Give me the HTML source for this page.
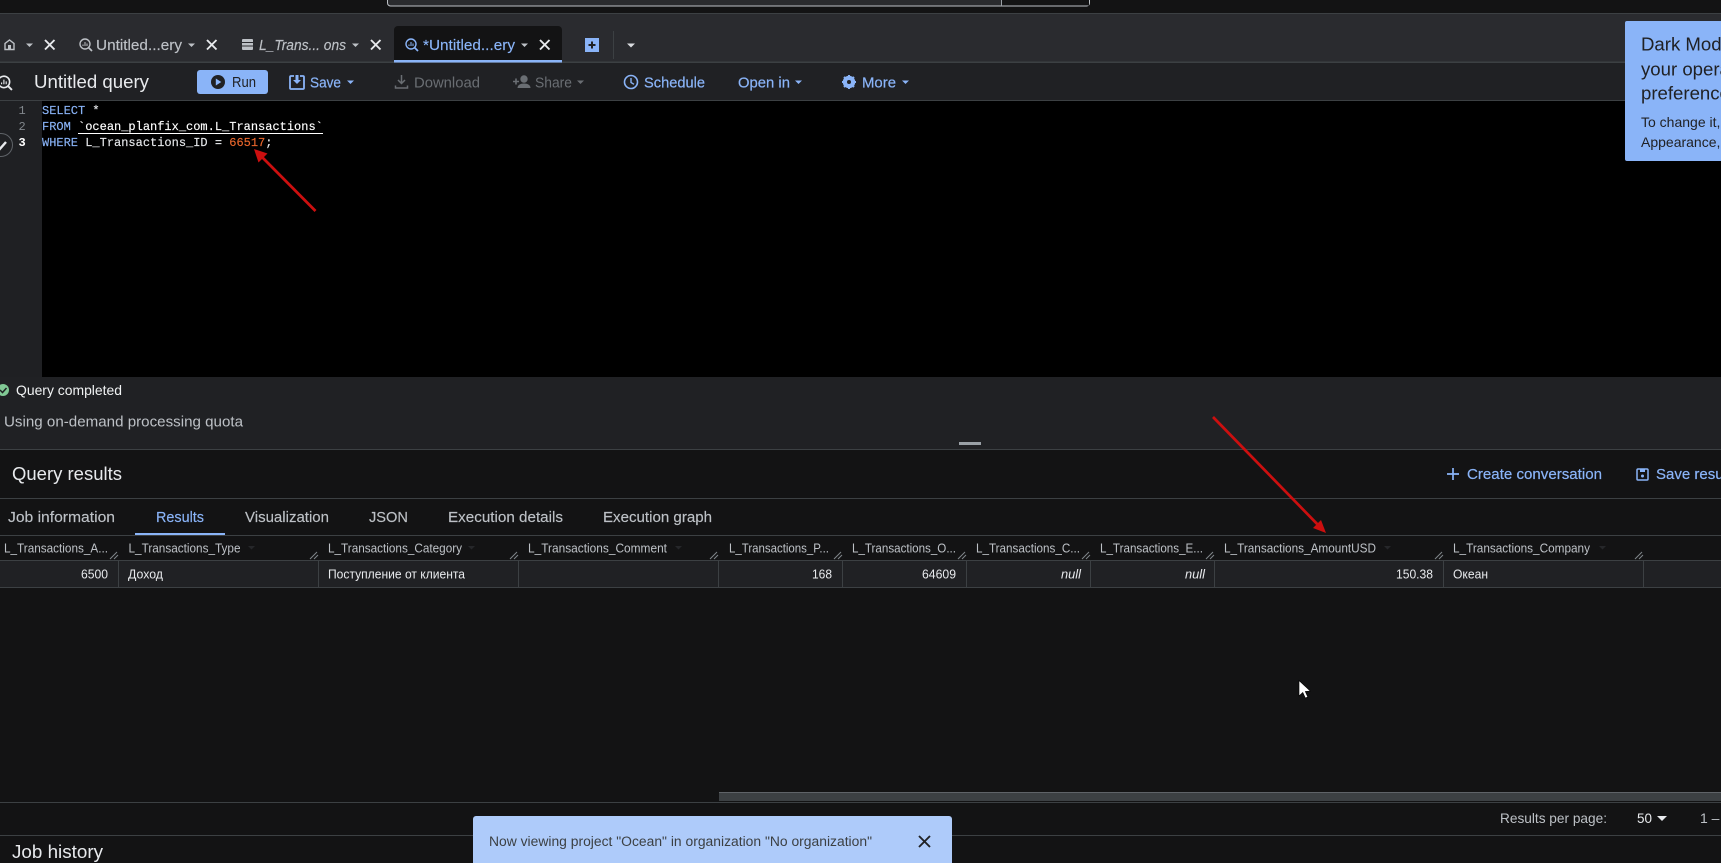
<!DOCTYPE html>
<html lang="en"><head><meta charset="utf-8"><title>Untitled query</title>
<style>
html,body{margin:0;padding:0;background:#131314;width:1721px;height:863px;overflow:hidden}
svg{display:block;position:absolute;left:0;top:0}
text{font-family:"Liberation Sans","Noto Sans CJK SC",sans-serif;white-space:pre}
.m{font-family:"Liberation Mono",monospace;font-size:12px;stroke-width:.15px}
.l{fill:#8ab4f8;stroke:#8ab4f8;stroke-width:.2px}
.h{font-size:12.5px;fill:#bdc1c6}
.c{font-size:12.5px;fill:#e8eaed}
.t{font-size:15px;fill:#bdc1c6;stroke:#bdc1c6;stroke-width:.15px}
.tb{font-size:15px}
</style></head><body>
<svg width="1721" height="863" viewBox="0 0 1721 863" xmlns="http://www.w3.org/2000/svg">
<defs>
<g id="q" fill="none" stroke-width="1.4"><circle cx="6" cy="6" r="5"/><path d="M9.6 9.6 13 13" stroke-width="1.7"/><path d="M4 8V6.5M6 8V4M8 8V5.5" stroke-width="1"/></g>
<g id="x" fill="none" stroke-width="1.9"><path d="M0 0 9.5 9.5M9.5 0 0 9.5"/></g>
<path id="rz" d="M0 8 7 1M4 8 8 4" fill="none" stroke="#80868b" stroke-width="1"/>
</defs>
<rect width="1721" height="863" fill="#131314"/>
<!-- top strip -->
<rect x="387.500" y="-6" width="702" height="12" rx="3" fill="#2a2b2e" stroke="#bdc1c6"/>
<rect x="1002" y="-1" width="87" height="6.500" fill="#141415"/>
<path d="M1001.500 0V6" stroke="#9aa0a6"/>
<rect y="13" width="1721" height="50" fill="#2a2b2f"/>
<rect y="13" width="1721" height="1" fill="#3c4043"/>
<rect y="61.500" width="1721" height="1.500" fill="#3c4043"/>
<rect y="63" width="1721" height="38" fill="#202124"/>
<rect y="100" width="1721" height="1" fill="#3c4043"/>
<!-- tabs -->
<path d="M5 49.500V43.500L9.500 40 14 43.500V49.500Z" fill="none" stroke="#bdc1c6" stroke-width="1.400"/><rect x="8" y="45" width="3" height="4.500" fill="#bdc1c6"/>
<path d="M26 43.500h7l-3.500 3.500z" fill="#bdc1c6"/>
<use href="#x" x="45" y="40" stroke="#e8eaed"/>
<use href="#q" x="79" y="38" stroke="#bdc1c6"/>
<text class="t" x="96" y="50" textLength="86" lengthAdjust="spacingAndGlyphs">Untitled...ery</text>
<path d="M188 43.500h7l-3.500 3.500z" fill="#bdc1c6"/>
<use href="#x" x="207" y="40" stroke="#e8eaed"/>
<rect x="242" y="39" width="11" height="11" rx="1" fill="#bdc1c6"/><path d="M242 42.500h11M242 46h11" stroke="#2a2b2f"/>
<text class="t" x="259" y="50" font-style="italic" textLength="87" lengthAdjust="spacingAndGlyphs">L_Trans... ons</text>
<path d="M352 43.500h7l-3.500 3.500z" fill="#bdc1c6"/>
<use href="#x" x="371" y="40" stroke="#e8eaed"/>
<path d="M394 62V30a4 4 0 0 1 4-4h160a4 4 0 0 1 4 4v32z" fill="#131314"/>
<rect x="394" y="60" width="168" height="2.500" fill="#8ab4f8"/>
<use href="#q" x="405" y="38" stroke="#8ab4f8"/>
<text class="t" x="423" y="50" style="fill:#8ab4f8;stroke:#8ab4f8" textLength="92" lengthAdjust="spacingAndGlyphs">*Untitled...ery</text>
<path d="M521 43.500h7l-3.500 3.500z" fill="#bdc1c6"/>
<use href="#x" x="540" y="40" stroke="#e8eaed"/>
<rect x="585" y="38" width="14" height="14" fill="#8ab4f8"/><path d="M592 41.500v7M588.500 45h7" stroke="#202124" stroke-width="2"/>
<rect x="613" y="31" width="1" height="28" fill="#3c4043"/>
<path d="M627 43.500h8l-4 4z" fill="#dadce0"/>
<!-- toolbar -->
<g transform="translate(-3 75) scale(1.150)"><use href="#q" stroke="#e8eaed"/></g>
<text x="34" y="88" font-size="18" fill="#e8eaed" textLength="115" lengthAdjust="spacingAndGlyphs">Untitled query</text>
<rect x="197" y="70" width="71" height="24" rx="3" fill="#8ab4f8"/>
<circle cx="218" cy="82" r="7" fill="#202124"/><path d="M215.800 78.500v7l5.500-3.500z" fill="#8ab4f8"/>
<text class="tb" x="232" y="87" fill="#202124" textLength="24" lengthAdjust="spacingAndGlyphs">Run</text>
<path d="M294 76h-3a1 1 0 0 0-1 1v11a1 1 0 0 0 1 1h12a1 1 0 0 0 1-1V77a1 1 0 0 0-1-1h-3" fill="none" stroke="#8ab4f8" stroke-width="1.800"/><path d="M295.500 75h3v5h2.500l-4 4-4-4h2.500z" fill="#8ab4f8"/>
<text class="tb l" x="310" y="87.500" textLength="31" lengthAdjust="spacingAndGlyphs">Save</text>
<path d="M347 80.500h7l-3.500 3.500z" fill="#8ab4f8"/>
<path d="M401.500 75v8M398 80l3.500 3.500L405 80M395.500 85.500v2.500h12v-2.500" fill="none" stroke="#6a6e73" stroke-width="1.500"/>
<text class="tb" x="414" y="87.500" fill="#6a6e73" textLength="66" lengthAdjust="spacingAndGlyphs">Download</text>
<path d="M513 81.500h6M516 78.500v6" stroke="#6a6e73" stroke-width="1.600"/><circle cx="524" cy="79" r="3.700" fill="#6a6e73"/><path d="M517.500 88c0-3 3-4.500 6.500-4.500s6.500 1.500 6.500 4.500z" fill="#6a6e73"/>
<text class="tb" x="535" y="87.500" fill="#6a6e73" textLength="37" lengthAdjust="spacingAndGlyphs">Share</text>
<path d="M577 80.500h7l-3.500 3.500z" fill="#6a6e73"/>
<circle cx="631" cy="82" r="6.500" fill="none" stroke="#8ab4f8" stroke-width="1.600"/><path d="M631 78v4.500l3 1.800" fill="none" stroke="#8ab4f8" stroke-width="1.400"/>
<text class="tb l" x="644" y="87.500" textLength="61" lengthAdjust="spacingAndGlyphs">Schedule</text>
<text class="tb l" x="738" y="87.500" textLength="52" lengthAdjust="spacingAndGlyphs">Open in</text>
<path d="M795 80.500h7l-3.500 3.500z" fill="#8ab4f8"/>
<circle cx="849" cy="82" r="4.500" fill="none" stroke="#8ab4f8" stroke-width="3.500"/><path d="M849 75v14M842 82h14M844 77l10 10M854 77l-10 10" stroke="#8ab4f8" stroke-width="2"/><circle cx="849" cy="82" r="2" fill="#202124"/>
<text class="tb l" x="862" y="87.500" textLength="34" lengthAdjust="spacingAndGlyphs">More</text>
<path d="M902 80.500h7l-3.500 3.500z" fill="#8ab4f8"/>
<!-- editor -->
<rect y="101" width="1721" height="276" fill="#000"/>
<rect y="101" width="42" height="276" fill="#1f2023"/>
<text class="m" x="18.500" y="114" fill="#80868b">1</text>
<text class="m" x="18.500" y="130" fill="#80868b">2</text>
<text class="m" x="18.500" y="146" fill="#fff" font-weight="bold">3</text>
<circle cx="1" cy="145" r="11.500" fill="#1f2023" stroke="#5f6368"/>
<path d="M-1 150 6 142" stroke="#e8eaed" stroke-width="2.400"/>
<text class="m" x="42" y="114"><tspan fill="#8ab4f8" stroke="#8ab4f8">SELECT</tspan><tspan fill="#e8eaed" stroke="#e8eaed"> *</tspan></text>
<text class="m" x="42" y="130"><tspan fill="#8ab4f8" stroke="#8ab4f8">FROM</tspan><tspan fill="#fff" stroke="#fff"> `ocean_planfix_com.L_Transactions`</tspan></text>
<rect x="78" y="133" width="245" height="1" fill="#fff"/>
<text class="m" x="42" y="146"><tspan fill="#8ab4f8" stroke="#8ab4f8">WHERE</tspan><tspan fill="#e8eaed" stroke="#e8eaed"> L_Transactions_ID = </tspan><tspan fill="#e8662c" stroke="#e8662c">66517</tspan><tspan fill="#e8eaed" stroke="#e8eaed">;</tspan></text>
<!-- dark mode box -->
<rect x="1625" y="21" width="100" height="140" rx="2" fill="#8ab4f8"/>
<text x="1641" y="50.500" font-size="18.600" fill="#202124">Dark Mode</text>
<text x="1641" y="75.500" font-size="18.600" fill="#202124">your operating</text>
<text x="1641" y="99.500" font-size="18.600" fill="#202124">preferences</text>
<text x="1641" y="127" font-size="14" fill="#202124">To change it, go to</text>
<text x="1641" y="147" font-size="14" fill="#202124">Appearance, then</text>
<!-- status -->
<rect y="377" width="1721" height="72" fill="#202124"/>
<circle cx="3" cy="390" r="6" fill="#81c995"/><path d="M0 390l2.500 2.500 4-4.500" fill="none" stroke="#202124" stroke-width="1.500"/>
<text x="16" y="395" font-size="14" fill="#f1f3f4" textLength="106" lengthAdjust="spacingAndGlyphs">Query completed</text>
<text x="4" y="426.500" font-size="14.500" fill="#bdc1c6" textLength="239" lengthAdjust="spacingAndGlyphs">Using on-demand processing quota</text>
<rect x="959" y="442" width="22" height="3" fill="#9aa0a6"/>
<rect y="449" width="1721" height="1" fill="#3c4043"/>
<!-- results header -->
<text x="12" y="480" font-size="18" fill="#e8eaed" textLength="110" lengthAdjust="spacingAndGlyphs">Query results</text>
<path d="M1453 468v12M1459 474h-12" stroke="#8ab4f8" stroke-width="1.700"/>
<text class="tb l" x="1467" y="479" textLength="135" lengthAdjust="spacingAndGlyphs">Create conversation</text>
<rect x="1637" y="469" width="11" height="11" rx="1" fill="none" stroke="#8ab4f8" stroke-width="1.500"/><rect x="1640" y="469" width="5" height="3" fill="#8ab4f8"/><circle cx="1642.500" cy="476" r="1.500" fill="#8ab4f8"/>
<text class="tb l" x="1656" y="479">Save results</text>
<rect y="498" width="1721" height="1" fill="#3c4043"/>
<text class="t" x="8" y="522" textLength="107" lengthAdjust="spacingAndGlyphs">Job information</text>
<text class="t" x="156" y="522" style="fill:#8ab4f8;stroke:#8ab4f8" textLength="48" lengthAdjust="spacingAndGlyphs">Results</text>
<text class="t" x="245" y="522" textLength="84" lengthAdjust="spacingAndGlyphs">Visualization</text>
<text class="t" x="369" y="522" textLength="39" lengthAdjust="spacingAndGlyphs">JSON</text>
<text class="t" x="448" y="522" textLength="115" lengthAdjust="spacingAndGlyphs">Execution details</text>
<text class="t" x="603" y="522" textLength="109" lengthAdjust="spacingAndGlyphs">Execution graph</text>
<rect x="135" y="533" width="90" height="2" fill="#8ab4f8"/>
<rect y="535" width="1721" height="1" fill="#3c4043"/>
<!-- table -->
<rect y="560" width="1721" height="27" fill="#202124"/>
<rect y="560" width="1721" height="1" fill="#3c4043"/>
<rect y="587" width="1721" height="1" fill="#3c4043"/>
<path d="M118.500 561v26M318.500 561v26M518.500 561v26M718.500 561v26M842.500 561v26M966.500 561v26M1090.500 561v26M1214.500 561v26M1443.500 561v26M1643.500 561v26" stroke="#3c4043"/>
<text class="h" x="4" y="552.500" textLength="104" lengthAdjust="spacingAndGlyphs">L_Transactions_A...</text>
<text class="h" x="128.500" y="552.500" textLength="112" lengthAdjust="spacingAndGlyphs">L_Transactions_Type</text>
<text class="h" x="328" y="552.500" textLength="134" lengthAdjust="spacingAndGlyphs">L_Transactions_Category</text>
<text class="h" x="528" y="552.500" textLength="139" lengthAdjust="spacingAndGlyphs">L_Transactions_Comment</text>
<text class="h" x="729" y="552.500" textLength="100" lengthAdjust="spacingAndGlyphs">L_Transactions_P...</text>
<text class="h" x="852" y="552.500" textLength="104" lengthAdjust="spacingAndGlyphs">L_Transactions_O...</text>
<text class="h" x="976" y="552.500" textLength="104" lengthAdjust="spacingAndGlyphs">L_Transactions_C...</text>
<text class="h" x="1100" y="552.500" textLength="103" lengthAdjust="spacingAndGlyphs">L_Transactions_E...</text>
<text class="h" x="1224" y="552.500" textLength="152" lengthAdjust="spacingAndGlyphs">L_Transactions_AmountUSD</text>
<text class="h" x="1453" y="552.500" textLength="137" lengthAdjust="spacingAndGlyphs">L_Transactions_Company</text>
<path d="M248 546h7l-3.500 3.500zM468 546h7l-3.500 3.500zM675 546h7l-3.500 3.500zM1384 546h7l-3.500 3.500zM1599 546h7l-3.500 3.500z" fill="#26272a"/>
<use href="#rz" x="110" y="551"/><use href="#rz" x="310" y="551"/><use href="#rz" x="510" y="551"/><use href="#rz" x="710" y="551"/><use href="#rz" x="834" y="551"/><use href="#rz" x="958" y="551"/><use href="#rz" x="1082" y="551"/><use href="#rz" x="1206" y="551"/><use href="#rz" x="1435" y="551"/><use href="#rz" x="1635" y="551"/>
<text class="c" x="81" y="578.500" textLength="27" lengthAdjust="spacingAndGlyphs">6500</text>
<text class="c" x="128" y="578.500" textLength="35" lengthAdjust="spacingAndGlyphs">Доход</text>
<text class="c" x="328" y="578.500" textLength="137" lengthAdjust="spacingAndGlyphs">Поступление от клиента</text>
<text class="c" x="812" y="578.500" textLength="20" lengthAdjust="spacingAndGlyphs">168</text>
<text class="c" x="922" y="578.500" textLength="34" lengthAdjust="spacingAndGlyphs">64609</text>
<text class="c" x="1061" y="578.500" font-style="italic" textLength="20" lengthAdjust="spacingAndGlyphs">null</text>
<text class="c" x="1185" y="578.500" font-style="italic" textLength="20" lengthAdjust="spacingAndGlyphs">null</text>
<text class="c" x="1396" y="578.500" textLength="37" lengthAdjust="spacingAndGlyphs">150.38</text>
<text class="c" x="1453" y="578.500" textLength="35" lengthAdjust="spacingAndGlyphs">Океан</text>
<!-- bottom -->
<rect x="719" y="792" width="1002" height="9" fill="#3c4043"/>
<rect x="719" y="792" width="1002" height="1" fill="#5f6368"/>
<rect y="802" width="1721" height="1" fill="#3c4043"/>
<text x="1500" y="823" font-size="14" fill="#bdc1c6" textLength="107" lengthAdjust="spacingAndGlyphs">Results per page:</text>
<text x="1637" y="823" font-size="14" fill="#e8eaed" textLength="15" lengthAdjust="spacingAndGlyphs">50</text>
<path d="M1657 816h10l-5 5z" fill="#e8eaed"/>
<text x="1700" y="823" font-size="14" fill="#bdc1c6">1 –</text>
<rect y="835" width="1721" height="1" fill="#3c4043"/>
<text x="12" y="858" font-size="18" fill="#e8eaed" textLength="91" lengthAdjust="spacingAndGlyphs">Job history</text>
<path d="M473 863V819a3 3 0 0 1 3-3h473a3 3 0 0 1 3 3v44z" fill="#aecbfa"/>
<text x="489" y="846" font-size="13.500" fill="#3c4043" textLength="383" lengthAdjust="spacingAndGlyphs">Now viewing project "Ocean" in organization "No organization"</text>
<path d="M919 836l11 11M930 836l-11 11" stroke="#202124" stroke-width="1.900"/>
<!-- annotations -->
<g stroke="#cc0f0f" stroke-width="2.700" fill="none"><path d="M315.500 211 258 153"/><path d="M1213 417 1322 529"/></g>
<path d="M254 149l13.500 4.500-9 9zM1326 533l-13-5 8-8z" fill="#cc0f0f"/>
<!-- cursor -->
<path d="M1299 680.500v15.500l3.800-3.500 2.500 5.500 2.500-1-2.500-5.500 5-.5z" fill="#fff" stroke="#000" stroke-width=".6"/>
</svg>
</body></html>
